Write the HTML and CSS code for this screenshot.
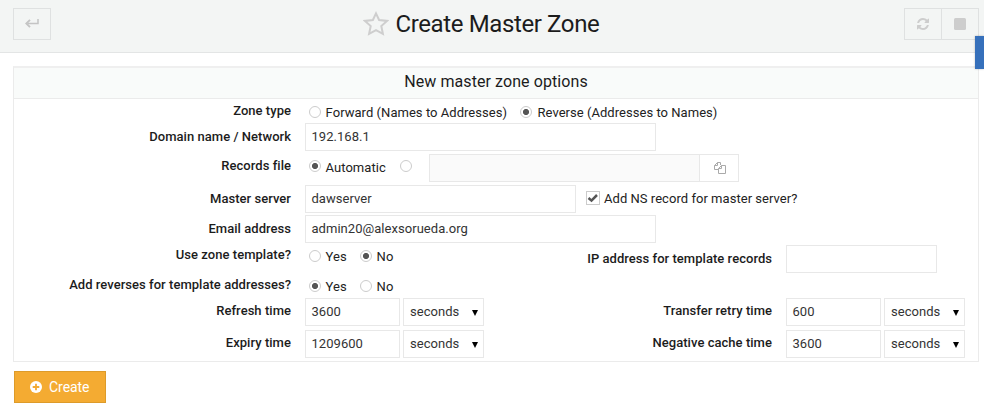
FILE: index.html
```html
<!DOCTYPE html>
<html lang="en">
<head>
<meta charset="utf-8">
<title>Create Master Zone</title>
<link rel="stylesheet" href="styles.css">
</head>
<body>
<header class="top">
  <div class="tool"><svg width="14" height="10" viewBox="0 0 14 10"><path d="M13 0V4.500H3" fill="none" stroke="#c4c4c4" stroke-width="1.500"/><path d="M5 .8L1.300 4.500L5 8.200" fill="none" stroke="#c4c4c4" stroke-width="1.900"/></svg></div>
  <h1><svg class="star" width="26" height="25" viewBox="0 0 26 25"><path d="M13 2.400L16.100 9L24 9.900L18.300 15L19.900 22.900L13 19.100L6.100 22.900L7.700 15L2 9.900L9.900 9Z" fill="none" stroke="#cecece" stroke-width="2"/></svg><span class="title">Create Master Zone</span></h1>
  <div class="tools">
    <div class="tool"><svg width="12" height="12" viewBox="0 0 1536 1536"><path fill="#cdcdcd" d="M1511 928q0 5-1 7-64 268-268 434.500T764 1536q-146 0-282.500-55T238 1324l-129 129q-19 19-45 19t-45-19-19-45V960q0-26 19-45t45-19h448q26 0 45 19t19 45-19 45l-137 137q71 66 161 102t187 36q134 0 250-65t186-179q11-17 53-117 8-23 30-23h192q13 0 22.500 9.500t9.500 22.500zm25-800v448q0 26-19 45t-45 19h-448q-26 0-45-19t-19-45 19-45l138-138Q969 256 768 256q-134 0-250 65T332 500q-11 17-53 117-8 23-30 23H50q-13 0-22.500-9.500T18 608v-7q65-268 270-434.500T768 0q146 0 284 55.500T1297 212l130-129q19-19 45-19t45 19 19 45z"/></svg></div>
    <div class="tool"><svg width="12" height="12" viewBox="0 0 12 12"><rect width="12" height="12" rx="1.500" fill="#cdcdcd"/></svg></div>
  </div>
</header>
<div class="side-tab"></div>
<main>
  <section class="panel">
    <h2><span>New master zone options</span></h2>
    <div class="row r-type"><label>Zone type</label>
      <div class="choices"><i class="radio"></i><span class="choice fwd">Forward (Names to Addresses)</span><i class="radio on"></i><span class="choice rev">Reverse (Addresses to Names)</span></div></div>
    <div class="row r-text"><label>Domain name / Network</label><div class="field wide">192.168.1</div></div>
    <div class="row r-file"><label>Records file</label>
      <div class="choices"><i class="radio on"></i><span class="choice auto">Automatic</span><i class="radio"></i></div>
      <div class="field disabled"></div><div class="picker"><svg width="12" height="12" viewBox="0 0 12 12"><path d="M4.500 7.500H.5V3.500L3.500.5H6.500V3M3.500.5V3.500H.5M4.500 11.500V6.500L7.500 3.500H11.500V11.500ZM7.500 3.500V6.500H4.500" fill="none" stroke="#aaa"/></svg></div></div>
    <div class="row r-text"><label>Master server</label><div class="field mid">dawserver</div><i class="check"><svg width="12" height="12" viewBox="0 0 12 12"><path d="M1.500 6L4.500 8.600L10 3" fill="none" stroke="#555" stroke-width="2.500"/></svg></i><span class="check-text">Add NS record for master server?</span></div>
    <div class="row r-text"><label>Email address</label><div class="field wide">admin20@alexsorueda.org</div></div>
    <div class="row r-template"><label>Use zone template?</label>
      <div class="choices"><i class="radio"></i><span class="choice yes">Yes</span><i class="radio on"></i><span class="choice">No</span></div>
      <label class="second">IP address for template records</label><div class="field ip"></div></div>
    <div class="row r-reverse"><label>Add reverses for template addresses?</label>
      <div class="choices"><i class="radio on"></i><span class="choice yes">Yes</span><i class="radio"></i><span class="choice">No</span></div></div>
    <div class="row r-time"><label>Refresh time</label><div class="time"><div class="field short">3600</div><div class="field select">seconds<i class="arrow"></i></div></div>
      <label class="second">Transfer retry time</label><div class="field short">600</div><div class="field select">seconds<i class="arrow"></i></div></div>
    <div class="row r-time"><label>Expiry time</label><div class="time"><div class="field short">1209600</div><div class="field select">seconds<i class="arrow"></i></div></div>
      <label class="second">Negative cache time</label><div class="field short">3600</div><div class="field select">seconds<i class="arrow"></i></div></div>
  </section>
  <div class="create"><svg width="12" height="12" viewBox="0 0 12 12"><circle cx="6" cy="6" r="6" fill="#fff"/><path d="M6 2.700V9.300M2.700 6H9.300" stroke="#f4ab32" stroke-width="1.800"/></svg><span>Create</span></div>
</main>
</body>
</html>
```
FILE: styles.css
```css
* { box-sizing: border-box; }
body { margin: 0; height: 412px; overflow: hidden; background: #fff; color: #222; font: 13px/16px Roboto, sans-serif; letter-spacing: .04px; position: relative; }
svg { display: block; flex: none; }
h1, h2 { margin: 0; font-weight: 400; }

.top { height: 53px; padding: 8px 5px 0 13px; display: flex; justify-content: space-between; align-items: flex-start; background: #f3f5f4; border-bottom: 1px solid #e3e5e5; }
.tool { width: 38px; height: 32px; display: flex; align-items: center; justify-content: center; border: 1px solid #dfe1e1; }
.tools { display: flex; }
.tools .tool + .tool { margin-left: -1px; }
h1 { display: flex; margin: 0 auto 0 311.500px; }
.star { margin: 2.500px 7px 0 0; }
.title { width: 206px; font-size: 24px; line-height: 32px; letter-spacing: -.38px; color: #1c1c1c; white-space: nowrap; }
.side-tab { position: absolute; right: 0; top: 36px; width: 9px; height: 33px; background: #3670bb; box-shadow: 0 0 2px rgba(0, 0, 0, .25); }

main { padding: 13px 5px 0 13px; }
.panel { height: 296px; border: 1px solid #ebebeb; border-top: 2px solid #efefef; }
h2 { height: 31px; border-bottom: 1px solid #ebebeb; background: #f9fbfa; text-align: center; font-size: 16px; line-height: 28px; letter-spacing: .08px; color: #1c1c1c; }

.row { display: flex; align-items: flex-start; white-space: nowrap; }
label { width: 277px; margin-right: 14px; text-align: right; font-weight: 500; color: #1c1c1c; flex: none; }
.r-type { height: 24px; }
.r-type label { padding-top: 4px; }
.r-type .choices { padding-top: 7px; }
.r-text { height: 30px; }
.r-text label { padding-top: 6px; }
.r-type + .r-text { height: 31px; }
.r-file { height: 31px; }
.r-file label { padding-top: 4px; }
.r-file .choices { width: 124px; padding-top: 6px; }
.r-file .choice { margin-top: 0; }
.r-template { height: 28px; }
.r-template label { padding-top: 2px; }
.r-template .second { padding-top: 6px; }
.r-template .choices { padding-top: 5px; width: 190px; }
.r-reverse { height: 25px; }
.r-reverse label { padding-top: 4px; }
.r-reverse .choices { padding-top: 7px; }
.r-time { height: 32px; }
.r-time label { padding-top: 5px; }
.time { display: flex; width: 190px; }
.second { width: 277px; }

.choices { display: flex; align-items: flex-start; padding-left: 4px; }
.radio { width: 12px; height: 12px; flex: none; border: 1px solid #ccc; border-radius: 50%; background: #fff; }
.radio.on { background: radial-gradient(circle, #555 0 2.700px, #fff 3.400px); }
.choice { margin: -1px 0 0 4.600px; }
.fwd { width: 194.400px; }
.rev { margin-left: 5.500px; }
.auto { width: 74.400px; }
.yes { width: 34.400px; }

.field { height: 28px; padding-left: 5.500px; border: 1px solid #e8e8e8; line-height: 26px; color: #333; flex: none; }
.wide { width: 351px; }
.mid { width: 271px; }
.disabled { width: 271px; background: #fafafa; }
.picker { width: 39px; height: 28px; padding-left: 2px; display: flex; align-items: center; justify-content: center; border: 1px solid #e8e8e8; border-left: 0; }
.ip { width: 151px; }
.short { width: 95px; }
.select { width: 81px; margin-left: 3px; display: flex; justify-content: space-between; align-items: center; padding: 0 5px 0 6px; }
.arrow { border: 3px solid transparent; border-top: 6px solid #000; border-bottom: 0; margin-top: 2px; }
.check { width: 14px; height: 14px; margin: 6px 4px 0 10px; border: 1px solid #ccc; }
.check-text { padding-top: 6px; }

.create { width: 92px; height: 32px; margin: 9px 0 0 1px; display: flex; align-items: center; padding-left: 15px; gap: 7px; border: 1px solid #dd9b2a; background: #f4ab32; color: #fff; font-size: 14px; letter-spacing: -.05px; }
```
